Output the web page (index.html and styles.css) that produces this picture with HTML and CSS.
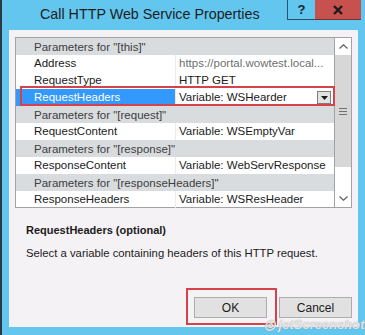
FILE: index.html
```html
<!DOCTYPE html>
<html lang="en">
  <head>
    <meta charset="UTF-8" />
    <title>Call HTTP Web Service Properties</title>
    <link rel="stylesheet" href="styles.css">
  </head>
  <body>
    <div class="window">
      <div class="titlebar">
        <span class="title">Call HTTP Web Service Properties</span>
        <div class="caption">
          <span class="cap_help">?</span>
          <span class="cap_close">
            <svg width="12" height="10" viewBox="0 0 12 10">
              <path d="M2 1 L10 9 M10 1 L2 9" stroke="#1b1b1b" stroke-width="2.4" />
            </svg>
          </span>
        </div>
      </div>

      <div class="client">
        <div class="grid">
          <div class="rows">
            <div class="row category">Parameters for "[this]"</div>
            <div class="row">
              <span class="name">Address</span>
              <span class="value muted">https://portal.wowtest.local...</span>
            </div>
            <div class="row">
              <span class="name">RequestType</span>
              <span class="value">HTTP GET</span>
            </div>
            <div class="row selected">
              <span class="name">RequestHeaders</span>
              <span class="value">
                Variable: WSHearder
                <span class="dropdown">
                  <svg width="7" height="4" viewBox="0 0 7 4"><path d="M0 0 H7 L3.5 4 Z" fill="#1b1b1b" /></svg>
                </span>
              </span>
            </div>
            <div class="row category">Parameters for "[request]"</div>
            <div class="row">
              <span class="name">RequestContent</span>
              <span class="value">Variable: WSEmptyVar</span>
            </div>
            <div class="row category">Parameters for "[response]"</div>
            <div class="row">
              <span class="name">ResponseContent</span>
              <span class="value">Variable: WebServResponse</span>
            </div>
            <div class="row category">Parameters for "[responseHeaders]"</div>
            <div class="row">
              <span class="name">ResponseHeaders</span>
              <span class="value">Variable: WSResHeader</span>
            </div>
          </div>
          <div class="scrollbar">
            <div class="sb_btn">
              <svg width="9" height="5" viewBox="0 0 9 5"><path d="M0.5 4.5 L4.5 0.8 L8.5 4.5" fill="none" stroke="#606060" stroke-width="1.2" /></svg>
            </div>
            <div class="sb_thumb">
              <svg width="8" height="7" viewBox="0 0 8 7"><path d="M0 0.5 H8 M0 3.5 H8 M0 6.5 H8" stroke="#707070" stroke-width="1" /></svg>
            </div>
            <div class="sb_track"></div>
            <div class="sb_btn">
              <svg width="9" height="5" viewBox="0 0 9 5"><path d="M0.5 0.5 L4.5 4.2 L8.5 0.5" fill="none" stroke="#606060" stroke-width="1.2" /></svg>
            </div>
          </div>
        </div>

        <div class="help">
          <div class="help_title">RequestHeaders (optional)</div>
          <div class="help_text">Select a variable containing headers of this HTTP request.</div>
        </div>

        <div class="actions">
          <button type="button">OK</button>
          <button type="button">Cancel</button>
        </div>
      </div>

      <div class="mark mark_row"></div>
      <div class="mark mark_ok"></div>
      <span class="watermark">&#9678; jetScreenshot</span>
    </div>
  </body>
</html>
```

FILE: styles.css
```css
* {
  box-sizing: border-box;
  padding: 0;
  margin: 0;
}
body {
  width: 365px;
  height: 335px;
  overflow: hidden;
  font-family: "Liberation Sans", Arial, sans-serif;
  background-color: #62c6ef;
}
.window {
  position: relative;
  width: 365px;
  height: 335px;
  background-color: #62c6ef;
  border-left: 2px solid #2b3a44;
  padding-left: 7px;
  display: flex;
  flex-direction: column;
}
.titlebar {
  height: 30px;
  display: flex;
  align-items: flex-start;
}
.title {
  margin-left: 31px;
  margin-top: 6px;
  font-size: 14.3px;
  color: #1d1d1d;
}
.caption {
  margin-left: auto;
  margin-right: 4px;
  display: flex;
  height: 20px;
}
.cap_help {
  width: 28px;
  height: 20px;
  border: 1px solid #29516b;
  border-top: none;
  border-right: none;
  font-weight: bold;
  font-size: 13px;
  color: #152532;
  text-align: center;
  line-height: 19px;
}
.cap_close {
  width: 46px;
  height: 20px;
  background-color: #c7514f;
  border-bottom: 1px solid #7a2e2e;
  display: flex;
  align-items: center;
  justify-content: center;
}
.client {
  width: 349px;
  height: 297px;
  background-color: #f5f2f6;
  padding: 7px 6px 9px 6px;
  display: flex;
  flex-direction: column;
}
.grid {
  height: 171px;
  border: 1px solid #a3a3a3;
  background-color: #fff;
  display: flex;
}
.rows {
  width: 319px;
}
.row {
  height: 17px;
  display: flex;
  align-items: center;
  font-size: 11.5px;
  color: #1b1b1b;
}
.row.category {
  background-color: #d9dcdf;
  color: #3d3d3d;
  padding-left: 18px;
}
.name {
  width: 160px;
  height: 17px;
  line-height: 17px;
  padding-left: 18px;
  border-right: 1px solid #eceaea;
}
.value {
  flex: 1;
  height: 17px;
  line-height: 17px;
  padding-left: 3px;
  display: flex;
  align-items: center;
}
.muted {
  color: #6f6f6f;
}
.selected .name {
  background-color: #3399ff;
  color: #fff;
}
.dropdown {
  margin-left: auto;
  margin-right: 3px;
  width: 14px;
  height: 13px;
  background-color: #e3e3e3;
  border: 1px solid #7c7c7c;
  display: flex;
  align-items: center;
  justify-content: center;
}
.scrollbar {
  width: 17px;
  border-left: 1px solid #a3a3a3;
  display: flex;
  flex-direction: column;
}
.sb_btn {
  height: 17px;
  display: flex;
  align-items: center;
  justify-content: center;
}
.sb_thumb {
  height: 112px;
  background-color: #d7d7d7;
  display: flex;
  align-items: center;
  justify-content: center;
}
.sb_track {
  flex: 1;
}
.help {
  padding-left: 11px;
  padding-top: 14px;
  color: #1b1b1b;
}
.help_title {
  font-size: 11px;
  font-weight: bold;
  line-height: 16px;
  margin-bottom: 7px;
}
.help_text {
  font-size: 11.3px;
  line-height: 16px;
}
.actions {
  margin-top: auto;
  display: flex;
  justify-content: flex-end;
  gap: 12px;
}
button {
  width: 73px;
  height: 21px;
  font-family: "Liberation Sans", Arial, sans-serif;
  font-size: 12px;
  color: #1b1b1b;
  background-color: #e1e1e1;
  border: 1px solid #adadad;
}
.mark {
  position: absolute;
  border: 2px solid #d5424a;
}
.mark_row {
  left: 18px;
  top: 86px;
  width: 315px;
  height: 20px;
}
.mark_ok {
  left: 184px;
  top: 288px;
  width: 91px;
  height: 37px;
}
.watermark {
  position: absolute;
  left: 262px;
  top: 317px;
  font-size: 13px;
  font-style: italic;
  font-weight: bold;
  color: rgba(255, 255, 255, 0.75);
  text-shadow: 0 0 1px #8a8a8a;
}
```
